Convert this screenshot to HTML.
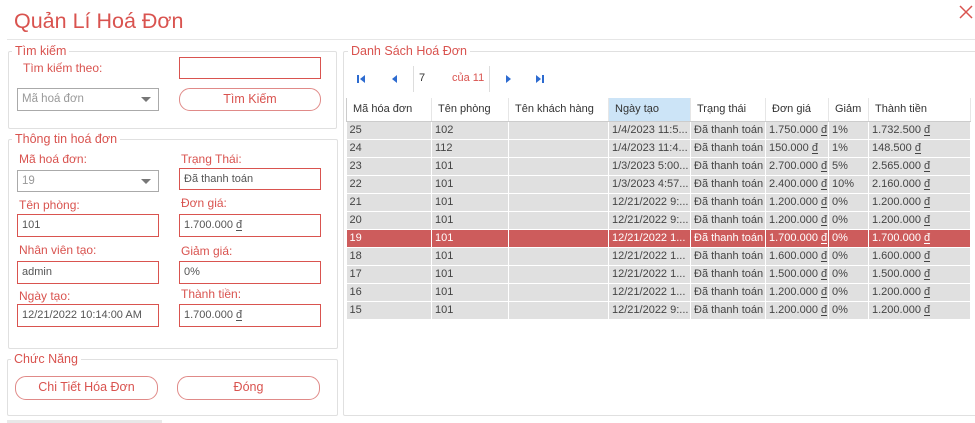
<!DOCTYPE html>
<html><head><meta charset="utf-8"><style>
*{box-sizing:border-box;margin:0;padding:0}
body{width:975px;height:423px;background:#fff;font-family:"Segoe UI","Liberation Sans",sans-serif;position:relative;overflow:hidden;color:#d9534f}
.a{position:absolute}
.grp{position:absolute;border:1px solid #e0e0e0;border-radius:2px}
.lg{position:absolute;background:#fff;padding:0 3px;font-size:12.5px;color:#d9534f;line-height:14px}
.lb{position:absolute;font-size:12px;color:#d9534f;line-height:14px}
.in{position:absolute;border:1px solid #d9534f;background:#fff;font-size:11px;color:#555;padding-left:4px;line-height:20px}
.cb{position:absolute;border:1px solid #aaa;background:#fff;font-size:11.5px;color:#999;padding-left:4px;line-height:20px}
.cb:after{content:"";position:absolute;right:7px;top:8px;border-left:5px solid transparent;border-right:5px solid transparent;border-top:5px solid #777}
.bt{position:absolute;border:1px solid #e08a88;border-radius:11px;background:#fff;font-size:12.5px;color:#d9534f;text-align:center;line-height:21px}
table{position:absolute;left:346px;top:98px;border-collapse:collapse;font-size:11px;color:#444;table-layout:fixed}
td{height:18px;padding-left:3px;white-space:nowrap;overflow:hidden;background:#e0e0e0;border-right:1px solid #fff;border-bottom:1px solid #fff;line-height:17px}
th{height:23px;font-weight:normal;text-align:left;padding-left:6px;background:#fff;border-right:1px solid #e6e6e6;border-bottom:1px solid #ccc;color:#333;font-size:11px}
tr.s td{background:#cd5c5c;color:#fff}
u{text-decoration:none;border-bottom:1px solid currentColor;line-height:10px;display:inline-block}
</style></head><body>
<div class="a" style="left:14px;top:7px;font-size:21.5px;line-height:28px;color:#d9534f">Quản Lí Hoá Đơn</div>
<div class="a" style="left:7px;top:39px;width:968px;height:1px;background:#e6e6e6"></div>
<svg class="a" style="left:959px;top:5px" width="14" height="14"><path d="M1 1L13 13M13 1L1 13" stroke="#d9534f" stroke-width="1.5"/></svg>

<div class="grp" style="left:8px;top:51px;width:329px;height:78px"></div>
<div class="lg" style="left:12px;top:44px">Tìm kiếm</div>
<div class="lb" style="left:23px;top:61px">Tìm kiếm theo:</div>
<div class="in" style="left:179px;top:57px;width:142px;height:22px"></div>
<div class="cb" style="left:17px;top:88px;width:142px;height:23px">Mã hoá đơn</div>
<div class="bt" style="left:179px;top:88px;width:142px;height:23px">Tìm Kiếm</div>

<div class="grp" style="left:8px;top:139px;width:330px;height:210px"></div>
<div class="lg" style="left:12px;top:132px">Thông tin hoá đơn</div>
<div class="lb" style="left:19px;top:152px">Mã hoá đơn:</div>
<div class="cb" style="left:17px;top:170px;width:142px;height:22px">19</div>
<div class="lb" style="left:181px;top:152px">Trạng Thái:</div>
<div class="in" style="left:179px;top:168px;width:142px;height:22px">Đã thanh toán</div>
<div class="lb" style="left:19px;top:198px">Tên phòng:</div>
<div class="in" style="left:17px;top:214px;width:142px;height:23px">101</div>
<div class="lb" style="left:181px;top:196px">Đơn giá:</div>
<div class="in" style="left:179px;top:214px;width:142px;height:23px">1.700.000 <u>đ</u></div>
<div class="lb" style="left:19px;top:243px">Nhân viên tạo:</div>
<div class="in" style="left:17px;top:261px;width:142px;height:23px">admin</div>
<div class="lb" style="left:181px;top:244px">Giảm giá:</div>
<div class="in" style="left:179px;top:261px;width:142px;height:23px">0%</div>
<div class="lb" style="left:19px;top:289px">Ngày tạo:</div>
<div class="in" style="left:17px;top:304px;width:142px;height:23px">12/21/2022 10:14:00 AM</div>
<div class="lb" style="left:181px;top:287px">Thành tiền:</div>
<div class="in" style="left:179px;top:304px;width:142px;height:23px">1.700.000 <u>đ</u></div>

<div class="grp" style="left:7px;top:359px;width:331px;height:57px"></div>
<div class="lg" style="left:11px;top:352px">Chức Năng</div>
<div class="bt" style="left:15px;top:376px;width:143px;height:24px">Chi Tiết Hóa Đơn</div>
<div class="bt" style="left:177px;top:376px;width:143px;height:24px">Đóng</div>
<div class="a" style="left:7px;top:420px;width:155px;height:3px;background:#e8e8e8"></div>

<div class="grp" style="left:343px;top:51px;width:640px;height:365px"></div>
<div class="lg" style="left:348px;top:44px">Danh Sách Hoá Đơn</div>
<svg class="a" style="left:356px;top:74px" width="10" height="10"><rect x="1" y="1" width="2" height="8" fill="#2d6bd0"/><path d="M9 1L4 5L9 9Z" fill="#2d6bd0"/></svg>
<svg class="a" style="left:390px;top:74px" width="10" height="10"><path d="M7 1L2 5L7 9Z" fill="#2d6bd0"/></svg>
<div class="a" style="left:413px;top:66px;width:1px;height:26px;background:#ddd"></div>
<div class="a" style="left:419px;top:72px;font-size:11px;color:#333">7</div>
<div class="a" style="left:452px;top:72px;font-size:11px;color:#d9534f">của 11</div>
<div class="a" style="left:489px;top:66px;width:1px;height:26px;background:#ddd"></div>
<svg class="a" style="left:503px;top:74px" width="10" height="10"><path d="M3 1L8 5L3 9Z" fill="#2d6bd0"/></svg>
<svg class="a" style="left:535px;top:74px" width="10" height="10"><path d="M1 1L6 5L1 9Z" fill="#2d6bd0"/><rect x="7" y="1" width="2" height="8" fill="#2d6bd0"/></svg>

<table>
<colgroup><col style="width:85px"><col style="width:77px"><col style="width:100px"><col style="width:82px"><col style="width:75px"><col style="width:63px"><col style="width:40px"><col style="width:102px"></colgroup>
<tr><th style="border-left:1px solid #ccc">Mã hóa đơn</th><th>Tên phòng</th><th>Tên khách hàng</th><th style="background:#cce4f7">Ngày tạo</th><th>Trạng thái</th><th>Đơn giá</th><th>Giảm</th><th>Thành tiền</th></tr>
<tr><td>25</td><td>102</td><td></td><td>1/4/2023 11:5...</td><td>Đã thanh toán</td><td>1.750.000 <u>đ</u></td><td>1%</td><td>1.732.500 <u>đ</u></td></tr>
<tr><td>24</td><td>112</td><td></td><td>1/4/2023 11:4...</td><td>Đã thanh toán</td><td>150.000 <u>đ</u></td><td>1%</td><td>148.500 <u>đ</u></td></tr>
<tr><td>23</td><td>101</td><td></td><td>1/3/2023 5:00...</td><td>Đã thanh toán</td><td>2.700.000 <u>đ</u></td><td>5%</td><td>2.565.000 <u>đ</u></td></tr>
<tr><td>22</td><td>101</td><td></td><td>1/3/2023 4:57...</td><td>Đã thanh toán</td><td>2.400.000 <u>đ</u></td><td>10%</td><td>2.160.000 <u>đ</u></td></tr>
<tr><td>21</td><td>101</td><td></td><td>12/21/2022 9:...</td><td>Đã thanh toán</td><td>1.200.000 <u>đ</u></td><td>0%</td><td>1.200.000 <u>đ</u></td></tr>
<tr><td>20</td><td>101</td><td></td><td>12/21/2022 9:...</td><td>Đã thanh toán</td><td>1.200.000 <u>đ</u></td><td>0%</td><td>1.200.000 <u>đ</u></td></tr>
<tr class="s"><td>19</td><td>101</td><td></td><td>12/21/2022 1...</td><td>Đã thanh toán</td><td>1.700.000 <u>đ</u></td><td>0%</td><td>1.700.000 <u>đ</u></td></tr>
<tr><td>18</td><td>101</td><td></td><td>12/21/2022 1...</td><td>Đã thanh toán</td><td>1.600.000 <u>đ</u></td><td>0%</td><td>1.600.000 <u>đ</u></td></tr>
<tr><td>17</td><td>101</td><td></td><td>12/21/2022 1...</td><td>Đã thanh toán</td><td>1.500.000 <u>đ</u></td><td>0%</td><td>1.500.000 <u>đ</u></td></tr>
<tr><td>16</td><td>101</td><td></td><td>12/21/2022 1...</td><td>Đã thanh toán</td><td>1.200.000 <u>đ</u></td><td>0%</td><td>1.200.000 <u>đ</u></td></tr>
<tr><td>15</td><td>101</td><td></td><td>12/21/2022 9:...</td><td>Đã thanh toán</td><td>1.200.000 <u>đ</u></td><td>0%</td><td>1.200.000 <u>đ</u></td></tr>
</table>
</body></html>
